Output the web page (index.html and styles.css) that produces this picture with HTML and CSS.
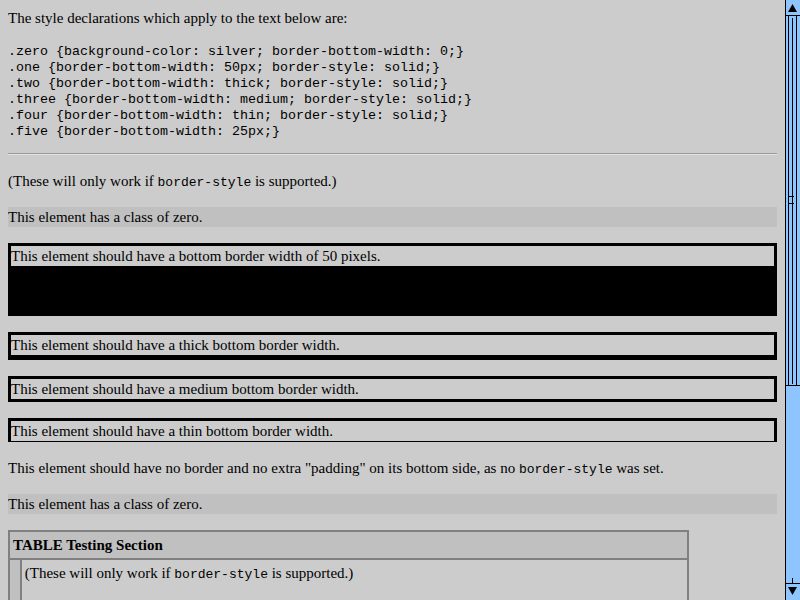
FILE: index.html
```html
<!DOCTYPE html>
<html>
<head>
<meta charset="utf-8">
<title>border-bottom-width</title>
<link rel="stylesheet" href="styles.css">
</head>
<body>
<p class="intro">The style declarations which apply to the text below are:</p>
<pre>.zero {background-color: silver; border-bottom-width: 0;}
.one {border-bottom-width: 50px; border-style: solid;}
.two {border-bottom-width: thick; border-style: solid;}
.three {border-bottom-width: medium; border-style: solid;}
.four {border-bottom-width: thin; border-style: solid;}
.five {border-bottom-width: 25px;}
</pre>
<hr>
<p>(These will only work if <code>border-style</code> is supported.)</p>
<p class="zero">This element has a class of zero.</p>
<p class="one">This element should have a bottom border width of 50 pixels.</p>
<p class="two">This element should have a thick bottom border width.</p>
<p class="three">This element should have a medium bottom border width.</p>
<p class="four">This element should have a thin bottom border width.</p>
<p class="five">This element should have no border and no extra "padding" on its bottom side, as no <code>border-style</code> was set.</p>
<p class="zero">This element has a class of zero.</p>
<table class="tabletest">
<tr><td colspan="2" class="head"><strong>TABLE Testing Section</strong></td></tr>
<tr><td class="side">&nbsp;</td><td class="main">
<p>(These will only work if <code>border-style</code> is supported.)</p>
</td></tr>
</table>

<div class="scrollbar">
<svg width="15" height="600" viewBox="0 0 15 600" xmlns="http://www.w3.org/2000/svg">
<rect x="0" y="0" width="15" height="600" fill="#8fc5ff"/>
<rect x="0" y="0" width="1" height="600" fill="#000"/>
<rect x="0" y="15" width="15" height="1" fill="#000"/>
<polygon points="7.5,4 3,12 12,12" fill="#000"/>
<rect x="3" y="16" width="1" height="370" fill="#000"/>
<rect x="7" y="18" width="1" height="366" fill="#000"/>
<rect x="11" y="16" width="1" height="370" fill="#000"/>
<rect x="0" y="385" width="15" height="1" fill="#000"/>
<rect x="4" y="196" width="5" height="1" fill="#000"/>
<rect x="4" y="203" width="5" height="1" fill="#000"/>
<rect x="0" y="583" width="15" height="1" fill="#000"/>
<rect x="7" y="578" width="1" height="5" fill="#000"/>
<polygon points="3,587 12,587 7.5,595" fill="#000"/>
</svg>
</div>
</body>
</html>
```
FILE: styles.css
```css
html {
  background: #cccccc;
  overflow: hidden;
}
body {
  margin: 8px 23px 8px 8px;
  font-family: "Liberation Serif", "Times New Roman", serif;
  font-size: 15px;
  line-height: 20px;
  color: #000;
}
p {
  margin: 16px 0;
}
p.intro {
  margin-top: 0;
}
pre {
  font-family: "Liberation Mono", "Courier New", monospace;
  font-size: 13.33px;
  line-height: 16px;
  margin: 16px 0 0;
}
code {
  font-family: "Liberation Mono", "Courier New", monospace;
  font-size: 13px;
  line-height: 14px;
}
hr {
  margin: 13px 0 16px;
  height: 0;
  border: 0;
  border-top: 1px solid #9a9a9a;
  border-bottom: 1px solid #e4e4e4;
}
.zero {
  background-color: silver;
  border-bottom-width: 0;
}
.one {
  border: 3px solid #000;
  border-bottom-width: 50px;
}
.two {
  border: 3px solid #000;
  border-bottom-width: 5px;
}
.three {
  border: 3px solid #000;
  border-bottom-width: 3px;
}
.four {
  border: 3px solid #000;
  border-bottom-width: 1px;
}
.tabletest {
  border-collapse: separate;
  border-spacing: 0;
  border: 1px solid #808080;
  width: 681px;
  margin-top: 16px;
}
.tabletest td {
  border: 1px solid #808080;
  padding: 3px;
  vertical-align: top;
}
.tabletest .head {
  background: silver;
}
.tabletest .side {
  background: silver;
  width: 1px;
}
.tabletest .main p {
  margin: 0 0 20px;
}
.scrollbar {
  position: fixed;
  top: 0;
  right: 0;
  width: 15px;
  height: 600px;
  line-height: 0;
}
```
